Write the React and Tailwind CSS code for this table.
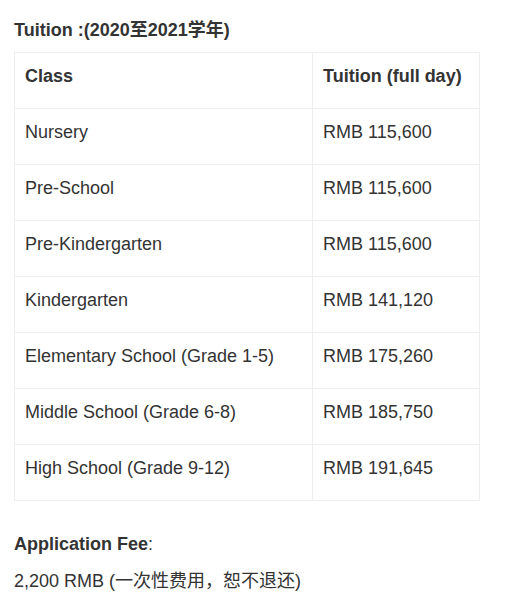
import React from 'react';

const rows = [
  ['Nursery', 'RMB 115,600'],
  ['Pre-School', 'RMB 115,600'],
  ['Pre-Kindergarten', 'RMB 115,600'],
  ['Kindergarten', 'RMB 141,120'],
  ['Elementary School (Grade 1-5)', 'RMB 175,260'],
  ['Middle School (Grade 6-8)', 'RMB 185,750'],
  ['High School (Grade 9-12)', 'RMB 191,645'],
];

const font = { fontFamily: '"Liberation Sans", Arial, "Noto Sans CJK SC", sans-serif' };

export default function App() {
  return (
    <div className="bg-white min-h-[608px] w-[514px] px-[14px] pt-[17px] text-[18px] leading-[26px] text-[#333]" style={font}>
      <p className="font-bold">Tuition :(2020至2021学年)</p>
      <table className="mt-[9px] w-[466px] border-collapse border border-[#eeeeee]">
        <thead>
          <tr className="border-b border-[#eeeeee]">
            <th className="w-[298px] border-r border-[#eeeeee] pl-[10px] pt-[10px] pb-[19px] text-left font-bold">Class</th>
            <th className="pl-[10px] pt-[10px] pb-[19px] text-left font-bold">Tuition (full day)</th>
          </tr>
        </thead>
        <tbody>
          {rows.map(([name, fee]) => (
            <tr key={name} className="border-b border-[#eeeeee]">
              <td className="border-r border-[#eeeeee] pl-[10px] pt-[10px] pb-[19px]">{name}</td>
              <td className="pl-[10px] pt-[10px] pb-[19px]">{fee}</td>
            </tr>
          ))}
        </tbody>
      </table>
      <p className="mt-[30px]"><span className="font-bold">Application Fee</span>:</p>
      <p className="mt-[11px]">2,200 RMB (一次性费用，恕不退还)</p>
    </div>
  );
}
